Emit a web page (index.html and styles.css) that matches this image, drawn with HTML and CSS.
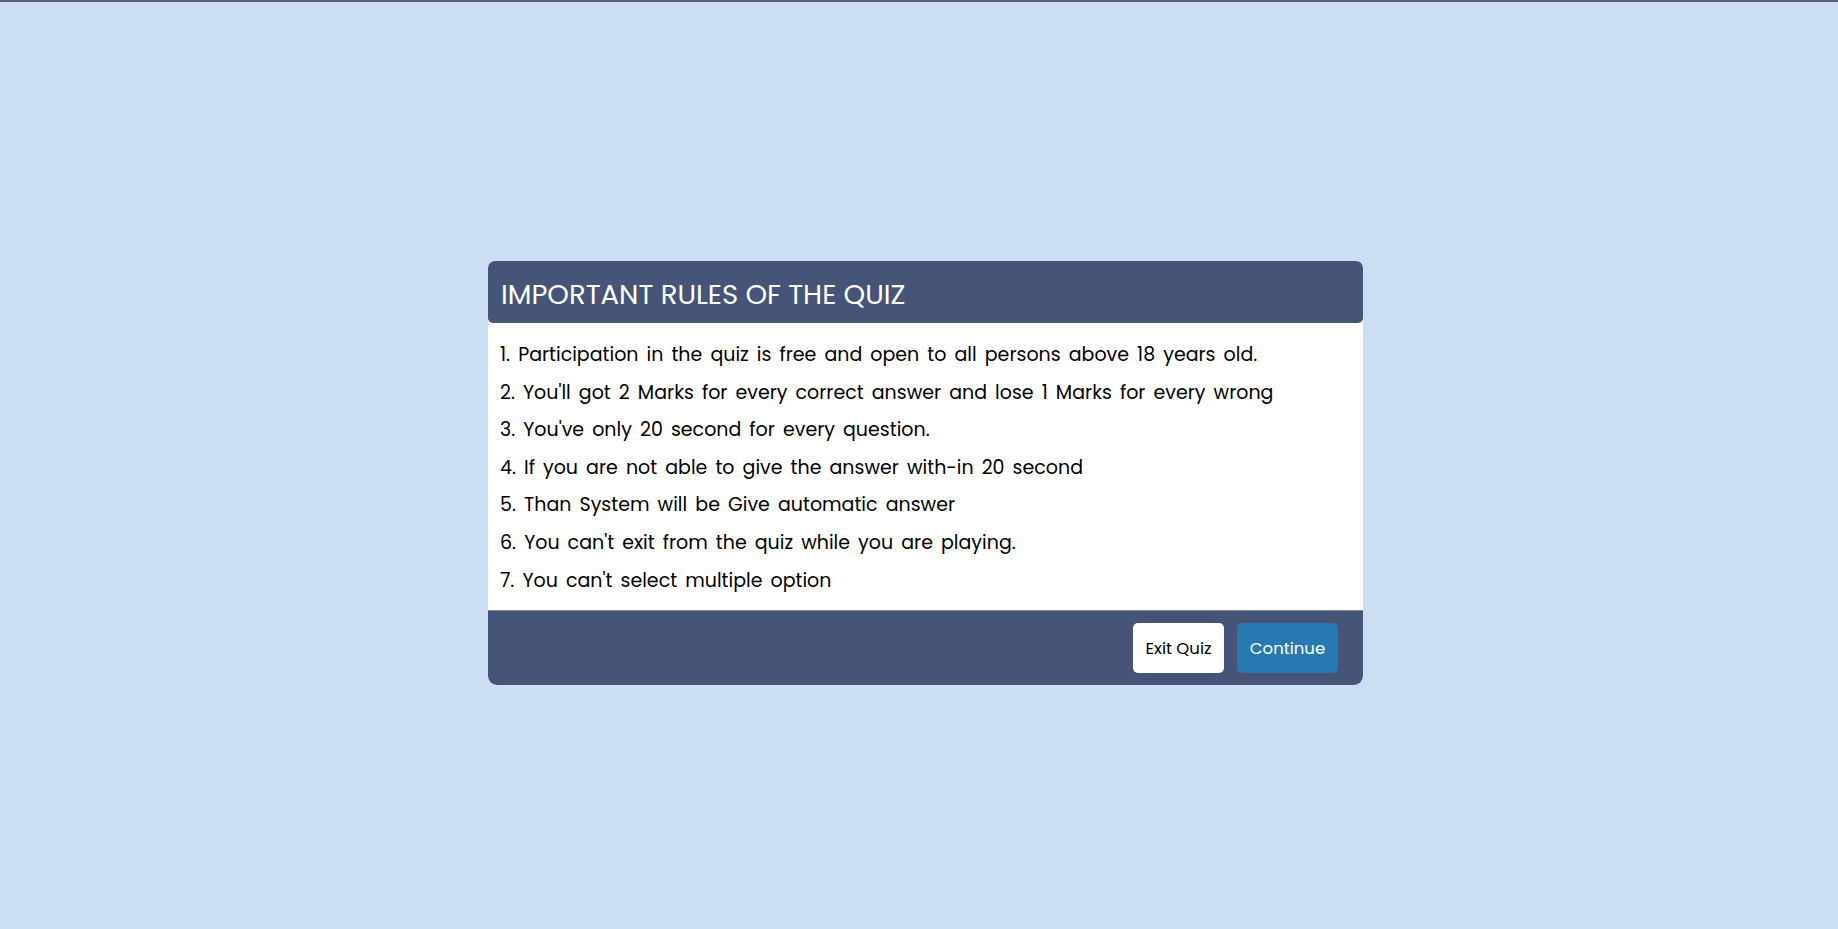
FILE: index.html
```
<!DOCTYPE html>
<html lang="en">
<head>
<meta charset="utf-8">
<title>Quiz Rules</title>
<link rel="stylesheet" href="styles.css">
</head>
<body>
<div class="topline"></div>
<main class="stage">
  <section class="info-box">
    <header class="info-title">IMPORTANT RULES OF THE QUIZ</header>
    <ol class="info-list">
      <li class="info">1. Participation in the quiz is free and open to all persons above 18 years old.</li>
      <li class="info">2. You'll got 2 Marks for every correct answer and lose 1 Marks for every wrong</li>
      <li class="info">3. You've only 20 second for every question.</li>
      <li class="info">4. If you are not able to give the answer with-in 20 second</li>
      <li class="info">5. Than System will be Give automatic answer</li>
      <li class="info">6. You can't exit from the quiz while you are playing.</li>
      <li class="info">7. You can't select multiple option</li>
    </ol>
    <footer class="buttons">
      <button class="btn btn-exit">Exit Quiz</button>
      <button class="btn btn-continue">Continue</button>
    </footer>
  </section>
</main>
</body>
</html>
```
FILE: styles.css
```
* { box-sizing: border-box; }
html, body { margin: 0; padding: 0; }
body {
  background: #cbdef4;
  font-family: "Poppins", Lato, "Noto Sans", sans-serif;
  height: 929px;
  overflow: hidden;
}
.topline { height: 2px; background: #5c6270; }
.stage {
  padding-top: 259px;
  padding-left: 488px;
}
.info-box {
  width: 875px;
  border-radius: 7px 7px 9px 9px;
  overflow: hidden;
  background: #ffffff;
}
.info-title {
  height: 62px;
  background: #465577;
  color: #ffffff;
  display: flex;
  align-items: center;
  padding: 5px 13px 0;
  font-size: 27.5px;
  font-weight: 400;
  border-radius: 0 0 5px 5px;
}
.info-list {
  list-style: none;
  margin: 0;
  padding: 13px 12px 11px;
}
.info {
  font-size: 19px;
  line-height: 37.6px;
  color: #000000;
  word-spacing: 3px;
}
.buttons {
  height: 75px;
  background: #465577;
  border-top: 1px solid #8089a3;
  display: flex;
  justify-content: flex-end;
  align-items: flex-start;
  gap: 13px;
  padding: 12px 25px 0 0;
}
.btn {
  height: 50px;
  border: none;
  border-radius: 5px;
  font-family: inherit;
  font-size: 16.5px;
  padding: 0;
}
.btn-exit { width: 91px; background: #ffffff; color: #000000; }
.btn-continue { width: 101px; background: #2779b1; color: #ffffff; }
```
